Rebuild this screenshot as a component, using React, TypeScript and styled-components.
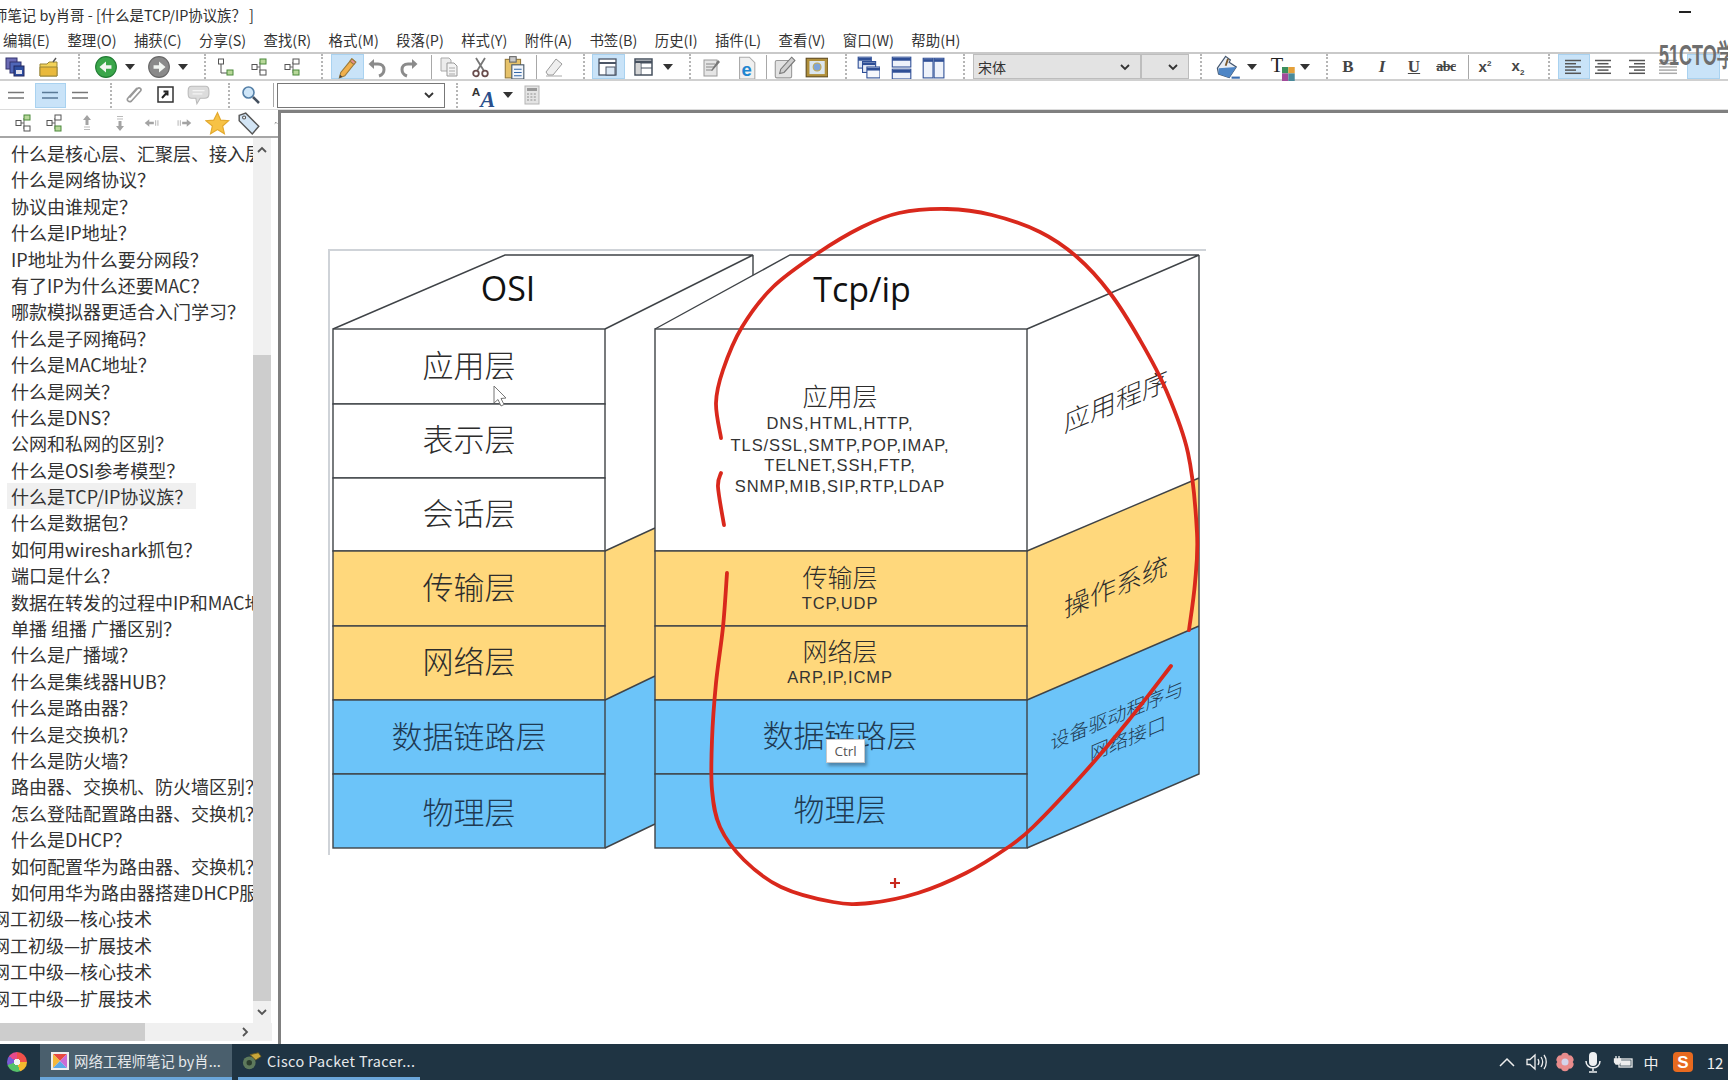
import React from "react";
import styled, { createGlobalStyle } from "styled-components";

const Global = createGlobalStyle`
  html, body { margin: 0; padding: 0; background: #fff; overflow: hidden; }
  body { font-family: "Noto Sans CJK SC", "Noto Sans", sans-serif; }
`;

const Window = styled.div`
  width: 1728px; height: 1080px; display: flex; flex-direction: column; overflow: hidden;
  position: relative; background: #fff; color: #333;
`;
const TitleBar = styled.div`
  height: 29px; flex: none; display: flex; align-items: center; justify-content: space-between;
  font-size: 14.4px; color: #2f2f2f; padding-right: 37px;
`;
const TitleText = styled.span`margin-left: -7px; white-space: nowrap;`;
const Minimize = styled.span`width: 12px; height: 1.5px; background: #222; margin-top: -5px;`;
const MenuBar = styled.div`
  height: 23px; flex: none; display: flex; align-items: center; gap: 17.4px; padding-left: 3px;
  font-size: 14.4px; color: #333; padding-bottom: 2px; box-sizing: border-box; white-space: nowrap;
`;
const Band = styled.div`
  height: 29px; flex: none; box-sizing: border-box; display: flex; align-items: center;
  border-top: 2px solid #c9c9c9; border-bottom: 2px solid #d0d0d0;
`;
const Band2 = styled(Band)`border-top: none; border-bottom: 1px solid #dcdcdc;`;
const Slot = styled.div<{ $w: number; $ml: number; $on?: boolean }>`
  flex: none; width: ${p => p.$w}px; margin-left: ${p => p.$ml}px; height: 25px;
  display: flex; align-items: center; justify-content: center; box-sizing: border-box;
  background: ${p => (p.$on ? "#c9e3f8" : "transparent")};
  border: ${p => (p.$on ? "1px solid #a9d2f0" : "none")};
`;
const GripLine = styled.div`
  width: 5px; height: 25px; box-sizing: border-box;
  border-left: 2px dotted #b5b5b5;
`;
const SepLine = styled.div`width: 1px; height: 24px; background: #a8a8a8;`;
const Caret = styled.div`
  width: 0; height: 0; border-left: 5px solid transparent; border-right: 5px solid transparent;
  border-top: 6px solid #333;
`;
const Combo = styled.div<{ $white?: boolean }>`
  width: 100%; height: 25px; box-sizing: border-box; display: flex; align-items: center;
  justify-content: space-between; padding: 0 9px 0 4px; font-size: 14px; color: #333;
  background: ${p => (p.$white ? "#fff" : "#e3e3e3")};
  border: ${p => (p.$white ? "1.5px solid #777" : "1.5px solid #bdbdbd")};
`;
const Watermark = styled.div`
  position: absolute; left: 1659px; top: 40px; line-height: 30px; white-space: nowrap;
  font-family: "Liberation Sans", sans-serif; font-weight: 700; font-size: 30px;
  color: #6e6e6e; transform: scaleX(.6); transform-origin: left center;
`;
const Body = styled.div`flex: 1; min-height: 0; display: flex;`;
const Sidebar = styled.div`width: 278px; flex: none; display: flex; flex-direction: column; height: 934px;`;
const SideTools = styled.div`
  height: 28px; flex: none; box-sizing: border-box; display: flex; align-items: center;
  border-bottom: 2px solid #a6a6a6; overflow: hidden;
`;
const SideMain = styled.div`flex: 1; min-height: 0; display: flex; width: 271px;`;
const Tree = styled.div`width: 253px; flex: none; overflow: hidden; padding-top: 2px;`;
const TreeRow = styled.div<{ $root?: boolean; $on?: boolean }>`
  height: 26.4px; line-height: 26.4px; font-size: 18px; white-space: nowrap; color: #333;
  margin-left: ${p => (p.$root ? "-8px" : "7px")}; padding-left: ${p => (p.$root ? "0" : "4px")};
  width: ${p => (p.$on ? "185px" : "auto")};
  background: ${p => (p.$on ? "#f0f0f0" : "transparent")};
`;
const VScroll = styled.div`width: 18px; flex: none; background: #f0f0f0; display: flex; flex-direction: column; align-items: center;`;
const VBtn = styled.div<{ $h: number }>`height: ${p => p.$h}px; flex: none; display: flex; align-items: center; justify-content: center; color: #555; width: 100%;`;
const VThumb = styled.div`width: 100%; background: #cdcdcd; height: 646px; flex: none;`;
const VSpace = styled.div`height: 193px; flex: none;`;
const HScroll = styled.div`height: 18px; flex: none; width: 272px; background: #f0f0f0; display: flex; align-items: center; justify-content: space-between; margin-bottom: 3px;`;
const HThumb = styled.div`width: 145px; height: 100%; background: #cdcdcd;`;
const HBtn = styled.div`width: 60px; display: flex; justify-content: flex-end; padding-right: 21px; box-sizing: border-box; color: #555;`;
const Editor = styled.div`
  flex: 1; height: 934px; box-sizing: border-box; border-left: 3px solid #808080; border-top: 3px solid #808080;
  position: relative;
`;
const Stage = styled.div`position: relative; margin: 77px 0 0 40px; width: 900px; height: 720px;`;
const DiagramSvg = styled.svg`display: block;`;
const Ctrl = styled.div`
  position: absolute; left: 505px; top: 549px; width: 39px; height: 24px; box-sizing: border-box;
  background: #fff; border: 1px solid #c8c8c8; box-shadow: 2px 3px 3px rgba(40,60,80,.45);
  font: 13.5px "Open Sans", sans-serif; color: #555; display: flex; align-items: center; justify-content: center;
`;
const CjkText = styled.text<{ $s: number; $c?: string }>`
  font-family: "Noto Sans CJK SC", sans-serif; font-weight: 300; font-size: ${p => p.$s}px;
  fill: ${p => p.$c || "#2c2c2c"}; text-anchor: middle; dominant-baseline: central;
`;
const HeadText = styled.text`
  font-family: "Open Sans", "Noto Sans", sans-serif; font-size: 34px; fill: #111; text-anchor: middle;
`;
const SmallText = styled.text`
  font-family: "Liberation Sans", sans-serif; font-size: 16.5px; fill: #333; text-anchor: middle;
  dominant-baseline: central; letter-spacing: .9px;
`;
const Taskbar = styled.div`
  position: absolute; left: 0; right: 0; bottom: 0; height: 36px; background: #1f3443;
  display: flex; align-items: stretch; color: #eee;
`;
const StartBox = styled.div`width: 40px; flex: none; display: flex; align-items: center; justify-content: center; padding-right: 6px; box-sizing: border-box;`;
const StartBall = styled.div`
  width: 20px; height: 20px; border-radius: 50%;
  background: radial-gradient(circle, #f4f4f4 0 3px, transparent 3.5px),
    conic-gradient(#f2504a 0 25%, #f5b92e 25% 45%, #56c26a 45% 70%, #7a5bd6 70% 85%, #e84a8a 85% 100%);
`;
const TaskBtn = styled.div<{ $w: number; $ml?: number; $on?: boolean; $pl: number }>`
  width: ${p => p.$w}px; margin-left: ${p => p.$ml || 0}px; flex: none; box-sizing: border-box;
  display: flex; align-items: center; gap: 5px; padding-left: ${p => p.$pl}px;
  border-bottom: 3px solid #6aa6da; background: ${p => (p.$on ? "#4a5f6d" : "transparent")};
  font-size: 14.4px; color: #e6e9ec; white-space: nowrap; overflow: hidden;
`;
const CiscoLabel = styled.span`letter-spacing: .4px;`;
const Tray = styled.div`margin-left: auto; display: flex; align-items: center; width: 235px; flex: none; overflow: hidden; gap: 0;`;
const TrayCell = styled.div<{ $w: number }>`width: ${p => p.$w}px; flex: none; display: flex; justify-content: center; align-items: center; font-size: 15px; color: #f0f0f0; white-space: nowrap;`;

/* ---------- icons ---------- */
const Svg: React.FC<{ s?: number; children: React.ReactNode }> = ({ s = 22, children }) => (
  <svg width={s} height={s} viewBox="0 0 22 22">{children}</svg>
);
const CopyWin = () => (
  <Svg><rect x="2" y="2" width="11" height="11" fill="#6b6bb5" stroke="#33336e" /><rect x="6" y="6" width="11" height="11" fill="#4f66b8" stroke="#33336e" /><rect x="10" y="10" width="10" height="10" fill="#2e4ea0" stroke="#22265e" /><rect x="12" y="14" width="6" height="4" fill="#e4e4ee" /></Svg>
);
const Folder = () => (
  <Svg><path d="M2 8h7l2-2h8v14H2z" fill="#f3d35a" stroke="#9a8636" /><path d="M2 11h17v9H2z" fill="#e9b93c" stroke="#9a8636" /><path d="M15 6l3-4" stroke="#555" strokeWidth="1.4" /></Svg>
);
const NavCircle = ({ dir, on }: { dir: "l" | "r"; on?: boolean }) => (
  <Svg s={24}>
    <circle cx="11" cy="11" r="9.5" fill={on ? "#3aa64a" : "#8a8a8a"} stroke={on ? "#1d7a30" : "#666"} />
    <path d={dir === "l" ? "M16 9.5h-5V6l-6 5 6 5v-3.5h5z" : "M6 9.5h5V6l6 5-6 5v-3.5H6z"} fill="#f2f6f2" />
  </Svg>
);
const TreeA = () => (
  <Svg><path d="M6 6v11h6" fill="none" stroke="#555" /><rect x="3.5" y="3" width="5" height="5" fill="#fff" stroke="#555" /><rect x="12" y="14" width="6" height="5" fill="#b8d89a" stroke="#4b8a3a" /></Svg>
);
const TreeB = ({ mirror }: { mirror?: boolean }) => (
  <Svg><path d="M6 11h5M11 6v11h3" fill="none" stroke="#666" /><rect x="11" y="3" width="6" height="5" fill={mirror ? "#fff" : "#b8d89a"} stroke={mirror ? "#555" : "#4b8a3a"} /><rect x="3" y="8.5" width="5" height="5" fill="#fff" stroke="#555" /><rect x="11" y="14" width="6" height="5" fill={mirror ? "#b8d89a" : "#fff"} stroke={mirror ? "#4b8a3a" : "#555"} /></Svg>
);
const Pencil = () => (
  <Svg s={24}><path d="M15.5 3.5l3.5 3-10 12.500-5 2 1.300-5z" fill="#f1b04c" stroke="#9b7b3c" /><path d="M15.500 3.500l3.500 3-1.800 2.200-3.500-3z" fill="#e88f8f" stroke="#9b7b3c" /><path d="M4 21l.6-3 2.200 1.900z" fill="#444" /></Svg>
);
const Curl = ({ flip }: { flip?: boolean }) => (
  <Svg s={22}><g transform={flip ? "matrix(-1 0 0 1 22 0)" : undefined}>
    <path d="M6 8h6c4 0 6 2.500 6 5.500S16 19 13 20" fill="none" stroke="#8b8b8b" strokeWidth="3" />
    <path d="M8 3L2.500 8 8 13z" fill="#8b8b8b" /></g></Svg>
);
const CopyDoc = () => (
  <Svg><path d="M3 2h8l2 2v11H3z" fill="#ececec" stroke="#aaa" /><path d="M9 7h7l3 3v10H9z" fill="#f4f4f4" stroke="#999" /><path d="M11 12h6M11 15h6M11 18h6" stroke="#aaa" /></Svg>
);
const Cut = () => (
  <Svg><path d="M6 2l8 13M15 2L7 15" stroke="#777" strokeWidth="1.800" /><circle cx="6" cy="17.500" r="2.800" fill="none" stroke="#6a4d4d" strokeWidth="1.800" /><circle cx="15" cy="17.500" r="2.800" fill="none" stroke="#6a4d4d" strokeWidth="1.800" /></Svg>
);
const Paste = () => (
  <Svg s={24}><rect x="3" y="4" width="14" height="17" fill="#e6c26a" stroke="#94793b" /><rect x="7" y="1.500" width="6" height="5" fill="#c9c9c9" stroke="#666" /><rect x="9" y="9" width="11" height="13" fill="#f1f5fb" stroke="#456" /><path d="M11 13h7M11 16h7M11 19h7" stroke="#3468a8" /></Svg>
);
const Eraser = () => (
  <Svg s={22}><path d="M13 3l6 5-9 11H5l-2-3z" fill="#efefef" stroke="#9a9a9a" /><path d="M3 20h16" stroke="#aaa" /></Svg>
);
const Layout1 = () => (
  <Svg><rect x="2" y="3" width="17" height="16" fill="#fff" stroke="#4b5566" strokeWidth="1.300" /><path d="M2 7h17" stroke="#4b5566" strokeWidth="2" /><rect x="9" y="11" width="9" height="8" fill="#dbe7f3" stroke="#4b5566" /></Svg>
);
const Layout2 = () => (
  <Svg><rect x="2" y="3" width="17" height="16" fill="#fff" stroke="#46505e" strokeWidth="1.500" /><path d="M2 6h17" stroke="#46505e" strokeWidth="3" /><path d="M8 6v13M8 12h11" stroke="#46505e" /><rect x="2.800" y="7" width="4.500" height="11" fill="#d5d5d5" /></Svg>
);
const Note = () => (
  <Svg><rect x="4" y="4" width="13" height="16" fill="#e5e5e5" stroke="#999" /><path d="M6 8h9M6 11h9M6 14h7" stroke="#888" /><path d="M18 4l2 2-7 8-2 1 1-2z" fill="#777" /></Svg>
);
const Ie = () => (
  <Svg s={24}><path d="M6 2h9l5 5v15H6z" fill="#f0f0f0" stroke="#aaa" /><text x="12.500" y="19" fontSize="17" fontWeight="700" fontFamily="Liberation Sans" fill="#1f86d1" textAnchor="middle">e</text></Svg>
);
const EditImg = () => (
  <Svg s={24}><rect x="3" y="5" width="15" height="16" fill="#e2e2e2" stroke="#999" rx="1.500" /><path d="M18 2l3 3-10 11-4 1 1-4z" fill="#cfcfcf" stroke="#777" /></Svg>
);
const Photo = () => (
  <Svg s={24}><rect x="2" y="3" width="20" height="17" fill="#b08f3a" stroke="#5e4a1f" /><rect x="5" y="5.500" width="14" height="12" fill="#dbe6ef" /><circle cx="12" cy="11" r="3.600" fill="#7fa4d8" stroke="#c5a94f" /></Svg>
);
const Cascade = () => (
  <Svg s={24}><rect x="2" y="2" width="12" height="10" fill="#dfe7f6" stroke="#2f4f96" /><path d="M2 4h12" stroke="#2f4f96" strokeWidth="2.500" /><rect x="6" y="6" width="12" height="10" fill="#e9eef8" stroke="#2f4f96" /><path d="M6 8h12" stroke="#2f4f96" strokeWidth="2.500" /><rect x="10" y="11" width="12" height="10" fill="#f6f8fc" stroke="#2f4f96" /><path d="M10 13h12" stroke="#2f4f96" strokeWidth="2.500" /></Svg>
);
const TileH = () => (
  <Svg s={24}><rect x="3" y="2" width="17" height="9" fill="#eef2fa" stroke="#2f4f96" /><path d="M3 4h17" stroke="#2f4f96" strokeWidth="2.500" /><rect x="3" y="13" width="17" height="9" fill="#eef2fa" stroke="#2f4f96" /><path d="M3 15h17" stroke="#2f4f96" strokeWidth="2.500" /></Svg>
);
const TileV = () => (
  <Svg s={24}><rect x="2" y="3" width="9" height="18" fill="#eef2fa" stroke="#2f4f96" /><path d="M2 5h9" stroke="#2f4f96" strokeWidth="2.500" /><rect x="12" y="3" width="9" height="18" fill="#eef2fa" stroke="#2f4f96" /><path d="M12 5h9" stroke="#2f4f96" strokeWidth="2.500" /></Svg>
);
const Chevron = ({ d = "down", s = 12 }: { d?: "down" | "up" | "right"; s?: number }) => (
  <svg width={s} height={s} viewBox="0 0 12 12" fill="none" stroke="currentColor" strokeWidth="1.800">
    <path d={d === "down" ? "M2 4l4 4 4-4" : d === "up" ? "M2 8l4-4 4 4" : "M4 2l4 4-4 4"} />
  </svg>
);
const Fill = () => (
  <Svg s={26}><path d="M9 2l4 3-1 2 6 4-6 9-9-3-1-5z" fill="#e8eef6" stroke="#44566e" /><path d="M3 12l15-1-6 9-9-3z" fill="#4e86c6" /><path d="M11 4l-2 6" stroke="#7a5a30" strokeWidth="1.600" /><path d="M14 20h7" stroke="#3a6db0" strokeWidth="1.800" /></Svg>
);
const TxtColor = () => (
  <Svg s={28}><text x="7" y="15" fontSize="16" fontFamily="Liberation Serif" fill="#222" textAnchor="middle">T</text><rect x="11" y="11" width="5" height="5" fill="#3b8f5c" /><rect x="16" y="11" width="5" height="5" fill="#e4a03a" /><rect x="11" y="16" width="5" height="6" fill="#a24a9a" /><rect x="16" y="16" width="5" height="6" fill="#4a8a9a" /></Svg>
);
const Fmt = styled.span<{ $i?: boolean; $u?: boolean; $small?: boolean }>`
  font-family: "Liberation Serif", serif; font-weight: 700; color: #444; font-size: ${p => (p.$small ? 14 : 17)}px;
  font-style: ${p => (p.$i ? "italic" : "normal")}; text-decoration: ${p => (p.$u ? "underline" : "none")};
  letter-spacing: ${p => (p.$small ? "-.5px" : "0")};
`;
const Strike = styled(Fmt)`text-decoration: line-through;`;
const Script = styled.span`font-family: "Liberation Sans", sans-serif; font-weight: 700; font-size: 15px; color: #444; sup, sub { font-size: 8px; }`;
const AlignIcon = ({ kind }: { kind: "l" | "c" | "r" | "j" }) => {
  const lines = [0, 1, 2, 3, 4].map(i => {
    const long = i % 2 === 0;
    const w = long ? 16 : 11;
    const x = kind === "l" ? 2 : kind === "r" ? 20 - w : kind === "c" ? 11 - w / 2 : 2;
    return <path key={i} d={`M${x} ${4.5 + i * 3.2}h${kind === "j" ? 18 : w}`} stroke={kind === "j" ? "#aaa" : "#555"} strokeWidth="1.5" />;
  });
  return <Svg>{lines}</Svg>;
};
const Dbl = ({ c = "#777" }: { c?: string }) => (
  <Svg><path d="M3 8.500h16M3 14h16" stroke={c} strokeWidth="1.600" /></Svg>
);
const Clip = () => (
  <Svg><path d="M15 4l-9 10c-2 2 1 5 3.500 3l9-10c1.500-2-1-4-3-2.500l-8 9" fill="none" stroke="#999" strokeWidth="1.700" /></Svg>
);
const LinkBox = () => (
  <Svg><rect x="3" y="3" width="15" height="15" fill="#fff" stroke="#333" strokeWidth="1.500" /><path d="M7 14l4.500-5M8.500 7.500h4v4" stroke="#222" strokeWidth="2" fill="none" /></Svg>
);
const Bubble = () => (
  <Svg s={24}><path d="M5 3h13c2 0 3 2 3 4v3c0 3-2 4-4 4h-4l-3 5-1-5H5c-2 0-3-2-3-4V7c0-2 1-4 3-4z" fill="#dcdcdc" stroke="#bbb" /><path d="M6 7h11M6 10h9" stroke="#f4f4f4" /></Svg>
);
const Search = () => (
  <Svg><circle cx="8.500" cy="8.500" r="5.500" fill="#cfe6f8" stroke="#5580a8" strokeWidth="1.600" /><path d="M13 13l6 6" stroke="#44505f" strokeWidth="2.600" /></Svg>
);
const AStyle = () => (
  <Svg s={26}><text x="5" y="12" fontSize="10" fontFamily="Liberation Sans" fontWeight="700" fill="#333" textAnchor="middle">A</text><text x="15" y="21" fontSize="19" fontFamily="Liberation Serif" fontWeight="700" fontStyle="italic" fill="#2a4f8c" textAnchor="middle">A</text><path d="M7 24h15" stroke="#2a4f8c" strokeWidth="1.600" /></Svg>
);
const Calc = () => (
  <Svg><rect x="4" y="2" width="14" height="18" fill="#e4e4e4" stroke="#b5b5b5" /><rect x="6" y="4" width="10" height="3" fill="#999" /><path d="M6 10h10M6 13h10M6 16h10" stroke="#aaa" strokeWidth="1.500" strokeDasharray="2 1.400" /></Svg>
);
const Move = ({ d }: { d: "u" | "d" | "l" | "r" }) => {
  const rot = { u: 0, d: 180, l: -90, r: 90 }[d];
  const s = d === "u" || d === "d" ? 22 : 20;
  return (
    <Svg s={s}><g transform={`rotate(${rot} 11 11)`}><path d="M11 3l-4 5h2.500v5h3V8H15z" fill="#a3a3a3" /><path d="M8 15h6M8 17.500h6" stroke="#bbb" strokeWidth="1.200" /></g></Svg>
  );
};
const Star = () => (
  <Svg s={25}><path d="M11 1.500l2.800 6.500 7 .6-5.300 4.600 1.600 6.900-6.100-3.700-6.100 3.700 1.600-6.900L.7 8.600l7-.6z" fill="#f7c245" stroke="#e3a92e" /></Svg>
);
const Tag = () => (
  <Svg s={24}><path d="M2 4l6-2 12 12-6 7L2 9z" fill="#d3e5f5" stroke="#555" strokeWidth="1.300" /><circle cx="6.500" cy="6" r="1.400" fill="#fff" stroke="#555" /></Svg>
);

/* ---------- toolbar flow ---------- */
type Item = { c: number; w?: number; on?: boolean; node: React.ReactNode };
const Grip: Item["node"] = <GripLine />;
const CaretN = <Caret />;
const Flow = ({ items }: { items: Item[] }) => {
  let right = 0;
  return (
    <>
      {items.map((it, i) => {
        const w = it.w ?? 30;
        const left = it.c - w / 2;
        const ml = left - right;
        right = left + w;
        return <Slot key={i} $w={w} $ml={ml} $on={it.on}>{it.node}</Slot>;
      })}
    </>
  );
};
const G = (c: number): Item => ({ c, w: 6, node: Grip });
const Sp = (c: number): Item => ({ c, w: 2, node: <SepLine /> });
const K = (c: number): Item => ({ c, w: 12, node: CaretN });

const row1: Item[] = [
  { c: 15, node: <CopyWin /> }, { c: 49, node: <Folder /> }, G(80),
  { c: 106, node: <NavCircle dir="l" on /> }, K(130), { c: 159, node: <NavCircle dir="r" /> }, K(183), G(206),
  { c: 226, node: <TreeA /> }, { c: 260, node: <TreeB /> }, { c: 293, node: <TreeB mirror /> }, G(323),
  { c: 347, w: 33, on: true, node: <Pencil /> }, { c: 377, w: 26, node: <Curl /> }, { c: 409, node: <Curl flip /> }, Sp(431),
  { c: 449, node: <CopyDoc /> }, { c: 481, node: <Cut /> }, { c: 514, node: <Paste /> }, Sp(536), { c: 554, node: <Eraser /> }, G(585),
  { c: 608, w: 33, on: true, node: <Layout1 /> }, { c: 644, node: <Layout2 /> }, K(668), G(691),
  { c: 711, node: <Note /> }, { c: 745, node: <Ie /> }, Sp(766), { c: 784, node: <EditImg /> }, { c: 816, node: <Photo /> }, G(847),
  { c: 868, node: <Cascade /> }, { c: 901, node: <TileH /> }, { c: 933, node: <TileV /> }, G(965),
  { c: 1057, w: 168, node: <Combo>宋体<Chevron /></Combo> },
  { c: 1165, w: 48, node: <Combo><span /><Chevron /></Combo> }, G(1202),
  { c: 1228, node: <Fill /> }, K(1252), { c: 1282, node: <TxtColor /> }, K(1305), G(1328),
  { c: 1348, node: <Fmt>B</Fmt> }, { c: 1382, node: <Fmt $i>I</Fmt> }, { c: 1414, node: <Fmt $u>U</Fmt> },
  { c: 1446, node: <Strike $small>abc</Strike> }, Sp(1468),
  { c: 1485, node: <Script>x<sup>2</sup></Script> }, { c: 1518, node: <Script>x<sub>2</sub></Script> }, G(1550),
  { c: 1574, w: 32, on: true, node: <AlignIcon kind="l" /> }, { c: 1603, node: <AlignIcon kind="c" /> },
  { c: 1636, node: <AlignIcon kind="r" /> }, { c: 1668, node: <AlignIcon kind="j" /> }, { c: 1703, w: 33, on: true, node: null },
];
const row2: Item[] = [
  { c: 16, node: <Dbl /> }, { c: 50, w: 31, on: true, node: <Dbl c="#5a7a96" /> }, { c: 80, node: <Dbl /> }, G(112),
  { c: 133, node: <Clip /> }, { c: 166, node: <LinkBox /> }, { c: 198, node: <Bubble /> }, G(230),
  { c: 251, node: <Search /> }, Sp(273),
  { c: 361, w: 168, node: <Combo $white><span /><Chevron /></Combo> }, G(458),
  { c: 483, node: <AStyle /> }, K(508), { c: 532, node: <Calc /> },
];
const row3: Item[] = [
  { c: 24, node: <TreeB /> }, { c: 55, node: <TreeB mirror /> }, { c: 87, node: <Move d="u" /> }, { c: 120, node: <Move d="d" /> },
  { c: 152, node: <Move d="l" /> }, { c: 184, node: <Move d="r" /> }, { c: 217, node: <Star /> }, { c: 249, node: <Tag /> },
  { c: 276, w: 4, node: <Chevron d="up" s={4} /> },
];

const menus = ["编辑(E)", "整理(O)", "捕获(C)", "分享(S)", "查找(R)", "格式(M)", "段落(P)", "样式(Y)", "附件(A)", "书签(B)", "历史(I)", "插件(L)", "查看(V)", "窗口(W)", "帮助(H)"];
const tree: string[] = [
  "什么是核心层、汇聚层、接入层", "什么是网络协议？", "协议由谁规定？", "什么是IP地址？", "IP地址为什么要分网段？", "有了IP为什么还要MAC？",
  "哪款模拟器更适合入门学习？", "什么是子网掩码？", "什么是MAC地址？", "什么是网关？", "什么是DNS？", "公网和私网的区别？", "什么是OSI参考模型？",
  "什么是TCP/IP协议族？", "什么是数据包？", "如何用wireshark抓包？", "端口是什么？", "数据在转发的过程中IP和MAC地址", "单播 组播 广播区别？",
  "什么是广播域？", "什么是集线器HUB？", "什么是路由器？", "什么是交换机？", "什么是防火墙？", "路由器、交换机、防火墙区别？", "怎么登陆配置路由器、交换机？",
  "什么是DHCP？", "如何配置华为路由器、交换机？", "如何用华为路由器搭建DHCP服务器？",
];
const roots = ["网工初级—核心技术", "网工初级—扩展技术", "网工中级—核心技术", "网工中级—扩展技术"];

/* ---------- diagram ---------- */
const smooth = (p: number[][]) => {
  let d = `M${p[0][0]} ${p[0][1]}`;
  for (let i = 0; i < p.length - 1; i++) {
    const a = p[Math.max(i - 1, 0)], b = p[i], c = p[i + 1], e = p[Math.min(i + 2, p.length - 1)];
    d += `C${b[0] + (c[0] - a[0]) / 6} ${b[1] + (c[1] - a[1]) / 6} ${c[0] - (e[0] - b[0]) / 6} ${c[1] - (e[1] - b[1]) / 6} ${c[0]} ${c[1]}`;
  }
  return d;
};
const stroke1 = [[721,438],[716,403],[723,370],[742,327],[773,287],[818,253],[862,227],[899,213],[947,209],[992,215],[1040,232],[1077,257],[1110,293],[1140,340],[1166,390],[1188,453],[1197,533],[1195,583],[1189,630]];
const stroke2 = [[721,473],[718,487],[724,525]];
const stroke3 = [[727,573],[723,627],[716,683],[712,740],[712,790],[720,827],[744,860],[781,887],[833,902],[870,903],[918,893],[966,873],[1007,848],[1033,827],[1084,773],[1129,720],[1171,666]];
const YEL = "#ffd87c", BLU = "#6cc4f9", LN = "#3f4347";
const osi = ["应用层", "表示层", "会话层", "传输层", "网络层", "数据链路层", "物理层"];
const osiY = [362, 436, 510, 584, 658, 733, 809];
const tops = [328, 403, 477, 550, 625, 699, 773, 847];
const fills = ["#fff", "#fff", "#fff", YEL, YEL, BLU, BLU];

const Diagram = () => (
  <DiagramSvg width={900} height={720} viewBox="321 189 900 720">
    <path d="M329 854V249H1206" fill="none" stroke="#cfd3d8" strokeWidth="2" />
    {/* OSI */}
    <path d="M333 328L505 254H753V550L605 624V328z" fill="#fff" />
    <path d="M605 550L655 527V675L605 699z" fill={YEL} />
    <path d="M605 699L655 675V823L605 847z" fill={BLU} />
    <path d="M333 328L505 254H753L605 328M753 254V276M605 550L655 527M605 699L655 675M605 847L655 823" fill="none" stroke={LN} strokeWidth="1.4" />
    {tops.slice(0, 7).map((y, i) => (
      <rect key={i} x={333} y={y} width={272} height={tops[i + 1] - y} fill={fills[i]} stroke={LN} strokeWidth="1.4" />
    ))}
    <HeadText x={508} y={300}>OSI</HeadText>
    {osi.map((t, i) => (
      <CjkText key={t} x={469} y={osiY[i]} $s={31} $c={i > 4 ? "#1f3a52" : "#2c2c2c"}>{t}</CjkText>
    ))}
    {/* TCP */}
    <path d="M655 328L790 254H1199V477L1027 550V328z" fill="#fff" />
    <path d="M1027 550L1199 477V625L1027 699z" fill={YEL} />
    <path d="M1027 699L1199 625V773L1027 847z" fill={BLU} />
    <path d="M655 328L790 254H1199L1027 328M1199 254V773L1027 847M1027 550L1199 477M1027 699L1199 625" fill="none" stroke={LN} strokeWidth="1.4" />
    <rect x={655} y={328} width={372} height={222} fill="#fff" stroke={LN} strokeWidth="1.4" />
    <rect x={655} y={550} width={372} height={75} fill={YEL} stroke={LN} strokeWidth="1.4" />
    <rect x={655} y={625} width={372} height={74} fill={YEL} stroke={LN} strokeWidth="1.4" />
    <rect x={655} y={699} width={372} height={74} fill={BLU} stroke={LN} strokeWidth="1.4" />
    <rect x={655} y={773} width={372} height={74} fill={BLU} stroke={LN} strokeWidth="1.4" />
    <HeadText x={862} y={301}>Tcp/ip</HeadText>
    <CjkText x={840} y={394} $s={25}>应用层</CjkText>
    <SmallText x={840} y={422}>DNS,HTML,HTTP,</SmallText>
    <SmallText x={840} y={444}>TLS/SSL,SMTP,POP,IMAP,</SmallText>
    <SmallText x={840} y={464}>TELNET,SSH,FTP,</SmallText>
    <SmallText x={840} y={485}>SNMP,MIB,SIP,RTP,LDAP</SmallText>
    <CjkText x={840} y={575} $s={25}>传输层</CjkText>
    <SmallText x={840} y={602}>TCP,UDP</SmallText>
    <CjkText x={840} y={649} $s={25}>网络层</CjkText>
    <SmallText x={840} y={676}>ARP,IP,ICMP</SmallText>
    <CjkText x={840} y={732} $s={31} $c="#1f3a52">数据链路层</CjkText>
    <CjkText x={840} y={806} $s={31} $c="#1f3a52">物理层</CjkText>
    <g transform="matrix(1 -0.42 0 1 1116 399)"><CjkText x={0} y={0} $s={26}>应用程序</CjkText></g>
    <g transform="matrix(1 -0.42 0 1 1116 584)"><CjkText x={0} y={0} $s={26}>操作系统</CjkText></g>
    <g transform="matrix(1 -0.42 0 1 1117 713)"><CjkText x={0} y={0} $s={19} $c="#1f3a52">设备驱动程序与</CjkText></g>
    <g transform="matrix(1 -0.42 0 1 1128 736)"><CjkText x={0} y={0} $s={19} $c="#1f3a52">网络接口</CjkText></g>
    {/* mouse pointer */}
    <path d="M494 385v17l4-3.500 3 6.500 3-1.500-3-6 5-.5z" fill="#fff" stroke="#777" strokeWidth="1" />
    {/* annotation */}
    <g transform="translate(0 -1)">
      {[stroke1, stroke2, stroke3].map((s, i) => (
        <path key={i} d={smooth(s)} fill="none" stroke="#d9281c" strokeWidth="3.8" strokeLinecap="round" strokeLinejoin="round" />
      ))}
    </g>
    <path d="M890 882h10M895 877v10" stroke="#c8281e" strokeWidth="2.2" />
  </DiagramSvg>
);

const KmIcon = () => (
  <svg width="18" height="18" viewBox="0 0 18 18">
    <rect width="18" height="18" fill="#eee" />
    <path d="M2 2h14L9 9z" fill="#e8493f" /><path d="M2 2l7 7-7 7z" fill="#f4b73a" />
    <path d="M2 16l7-7 7 7z" fill="#5aa8e8" /><path d="M16 2L9 9l7 7z" fill="#c96bd6" />
  </svg>
);
const CiscoIcon = () => (
  <svg width="20" height="20" viewBox="0 0 22 22">
    <circle cx="8" cy="13" r="7" fill="#5e7a5c" /><circle cx="8" cy="13" r="3" fill="#2c3e2e" />
    <path d="M9 4l9-2 3 4-6 4z" fill="#c9a63a" stroke="#6b5a1f" />
  </svg>
);
const TrayIcons = {
  up: <svg width="16" height="10" viewBox="0 0 16 10" fill="none" stroke="#eee" strokeWidth="1.5"><path d="M1 9l7-7 7 7" /></svg>,
  sound: <svg width="22" height="18" viewBox="0 0 22 18" fill="none" stroke="#eee" strokeWidth="1.3"><path d="M2 6.500h3L10 2v14l-5-4.500H2z" /><path d="M13 6c1.200 2 1.200 4 0 6M16 4c2 3 2 7 0 10M19 2c3 4 3 10 0 14" /></svg>,
  flower: <svg width="20" height="20" viewBox="0 0 20 20">{[0,60,120,180,240,300].map(a => <circle key={a} cx="10" cy="4.800" r="4" fill="#e88c8c" transform={`rotate(${a} 10 10)`} />)}<circle cx="10" cy="10" r="3.500" fill="#d4d4ea" /></svg>,
  mic: <svg width="18" height="22" viewBox="0 0 18 22" fill="none"><rect x="5" y="1" width="8" height="14" rx="4" fill="#eef0f2" /><path d="M2 10c0 9 14 9 14 0M9 17v3M5 21h8" stroke="#eef0f2" strokeWidth="1.500" /></svg>,
  plug: <svg width="20" height="14" viewBox="0 0 20 14" fill="none" stroke="#eee" strokeWidth="1.300"><rect x="6" y="4" width="13" height="8" /><rect x="8" y="6" width="9" height="4" fill="#eee" /><path d="M3 1v3M6 1v3M1.500 4h6v3l-2 2H3L1.500 7z" fill="#eee" /></svg>,
  s: <svg width="20" height="20" viewBox="0 0 20 20"><rect width="20" height="20" rx="4" fill="#e86a1f" /><text x="10" y="16" fontSize="17" fontWeight="700" fontFamily="Liberation Sans" textAnchor="middle" fill="#fff">S</text></svg>,
};

export default function App() {
  return (
    <Window>
      <Global />
      <TitleBar>
        <TitleText>师笔记 by肖哥 - [什么是TCP/IP协议族？ ]</TitleText>
        <Minimize />
      </TitleBar>
      <MenuBar>{menus.map(m => <span key={m}>{m}</span>)}</MenuBar>
      <Band><Flow items={row1} /></Band>
      <Band2><Flow items={row2} /></Band2>
      <Watermark>51CTO学</Watermark>
      <Body>
        <Sidebar>
          <SideTools><Flow items={row3} /></SideTools>
          <SideMain>
            <Tree>
              {tree.map(t => <TreeRow key={t} $on={t === "什么是TCP/IP协议族？"}>{t}</TreeRow>)}
              {roots.map(t => <TreeRow key={t} $root>{t}</TreeRow>)}
            </Tree>
            <VScroll>
              <VBtn $h={24}><Chevron d="up" /></VBtn>
              <VSpace />
              <VThumb />
              <VBtn $h={22}><Chevron /></VBtn>
            </VScroll>
          </SideMain>
          <HScroll><HThumb /><HBtn><Chevron d="right" /></HBtn></HScroll>
        </Sidebar>
        <Editor>
          <Stage>
            <Diagram />
            <Ctrl>Ctrl</Ctrl>
          </Stage>
        </Editor>
      </Body>
      <Taskbar>
        <StartBox><StartBall /></StartBox>
        <TaskBtn $w={192} $on $pl={11}><KmIcon />网络工程师笔记 by肖...</TaskBtn>
        <TaskBtn $w={182} $ml={6} $pl={4}><CiscoIcon /><CiscoLabel>Cisco Packet Tracer...</CiscoLabel></TaskBtn>
        <Tray>
          <TrayCell $w={28}>{TrayIcons.up}</TrayCell>
          <TrayCell $w={30}>{TrayIcons.sound}</TrayCell>
          <TrayCell $w={28}>{TrayIcons.flower}</TrayCell>
          <TrayCell $w={28}>{TrayIcons.mic}</TrayCell>
          <TrayCell $w={32}>{TrayIcons.plug}</TrayCell>
          <TrayCell $w={24}>中</TrayCell>
          <TrayCell $w={39}>{TrayIcons.s}</TrayCell>
          <TrayCell $w={26}>12</TrayCell>
        </Tray>
      </Taskbar>
    </Window>
  );
}
